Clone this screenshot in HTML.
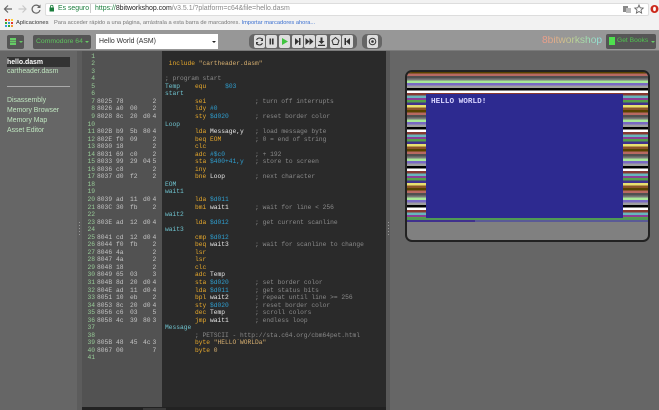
<!DOCTYPE html>
<html><head><meta charset="utf-8"><style>
html,body{margin:0;padding:0;width:659px;height:410px;overflow:hidden;background:#666;font-family:"Liberation Sans",sans-serif}
.a{position:absolute}
.t{position:absolute;white-space:pre;line-height:10px}
#code div{height:7.55px;line-height:7.55px;white-space:pre}
#code{position:absolute;left:165px;top:52.6px;font:6.25px/7.55px "Liberation Mono",monospace;color:#ddd}
.k{color:#e8a92c}.l{color:#6fc3cf}.h{color:#2f9fd0}.c{color:#8a8a8a}.s{color:#d8b070}.v{color:#e8e8e8}
#gut{position:absolute;left:82px;top:52.6px;width:80px;font:6.3px/7.55px "Liberation Mono",monospace;color:#c4c4c4}
#gut div{height:7.55px;position:relative}
#gut span{position:absolute;top:0}
#gut .n{right:67px;color:#98cc98}
.b0{left:15px}.b1{left:34px}.b2{left:48px}.b3{left:61px}.cy{left:70.5px}
.btn{position:absolute;top:35px;width:11px;height:13px;background:#ddd;border-radius:2px}
.btn svg{position:absolute;left:0;top:0;width:11px;height:13px}
.side{position:absolute;left:7px;font-size:6.9px;line-height:10px;color:#bfe5bf;white-space:pre}
</style></head><body>
<!-- chrome -->
<div class="a" style="left:0;top:0;width:659px;height:30px;background:#f2f2f2"></div>
<div class="a" style="left:45px;top:3px;width:602px;height:11px;background:#fff;border:1px solid #ddd;border-radius:2px"></div>
<svg class="a" style="left:0;top:0" width="659" height="30">
<path d="M12 9H5M8 5.5L4.500 9L8 12.500" fill="none" stroke="#666" stroke-width="1.200"/>
<path d="M18.500 9H26M22.500 5.500L26 9L22.500 12.500" fill="none" stroke="#c8c8c8" stroke-width="1.200"/>
<path d="M39.500 7A4 4 0 1 0 40 10" fill="none" stroke="#666" stroke-width="1.200"/><path d="M40.500 4.500V8H37z" fill="#666"/>
<rect x="49.500" y="7.500" width="4.500" height="4" fill="#1a7d3c"/><path d="M50.500 7.500V6.500a1.200 1.200 0 0 1 2.500 0V7.500" fill="none" stroke="#1a7d3c" stroke-width=".8"/>
<rect x="90" y="4" width="1" height="9" fill="#ccc"/>
<rect x="623" y="6" width="5" height="6" fill="#888"/><rect x="626" y="8" width="5" height="5" fill="#bbb"/>
<path d="M639 5l1.200 2.800 3 .3-2.200 2 .6 3-2.600-1.600-2.600 1.600.6-3-2.200-2 3-.3z" fill="none" stroke="#666" stroke-width=".9"/>
<circle cx="654.500" cy="9" r="4" fill="#cc2a1c"/><ellipse cx="654.500" cy="9" rx="1.400" ry="2.200" fill="#fff"/>
<g><rect x="5" y="19" width="2" height="2" fill="#d33"/><rect x="8" y="19" width="2" height="2" fill="#e93"/><rect x="11" y="19" width="2" height="2" fill="#fc3"/><rect x="5" y="22" width="2" height="2" fill="#3a3"/><rect x="8" y="22" width="2" height="2" fill="#39d"/><rect x="11" y="22" width="2" height="2" fill="#d33"/><rect x="5" y="25" width="2" height="2" fill="#39d"/><rect x="8" y="25" width="2" height="2" fill="#3a3"/><rect x="11" y="25" width="2" height="2" fill="#e93"/></g>
</svg>
<div class="t" style="left:58px;top:4px;font-size:6.9px;color:#1a7d3c">Es seguro</div>
<div class="t" style="left:95px;top:4px;font-size:6.95px;color:#888"><span style="color:#1a7d3c">https://</span><span style="color:#222">8bitworkshop.com</span>/v3.5.1/?platform=c64&amp;file=hello.dasm</div>
<div class="t" style="left:16px;top:18px;font-size:5.8px;color:#333">Aplicaciones</div>
<div class="t" style="left:54px;top:18px;font-size:5.7px;color:#777">Para acceder rápido a una página, arrástrala a esta barra de marcadores. <span style="color:#3a6fd0">Importar marcadores ahora...</span></div>
<!-- toolbar -->
<div class="a" style="left:0;top:30px;width:659px;height:20px;background:#979797;border-bottom:1px solid #7a7a7a"></div>
<div class="a" style="left:7px;top:35px;width:17px;height:14px;background:#555;border-radius:2px"></div>
<div class="a" style="left:10px;top:38px;width:6px;height:1.500px;background:#6c6;box-shadow:0 2.500px 0 #6c6,0 5px 0 #6c6"></div>
<div class="a" style="left:18.500px;top:41px;border:2px solid transparent;border-top-color:#6c6"></div>
<div class="a" style="left:33px;top:35px;width:58px;height:14px;background:#555;border-radius:2px"></div>
<div class="t" style="left:36px;top:37px;font-size:6.8px;color:#5fc45f">Commodore 64</div>
<div class="a" style="left:85px;top:41px;border:2px solid transparent;border-top-color:#6c6"></div>
<div class="a" style="left:96px;top:34px;width:122px;height:15px;background:#fff"></div>
<div class="t" style="left:99px;top:37px;font-size:6.9px;color:#333">Hello World (ASM)</div>
<div class="a" style="left:212px;top:41px;border:2px solid transparent;border-top-color:#222"></div>
<div class="a" style="left:249px;top:34px;width:108px;height:15px;background:#666;border-radius:5px"></div>
<div class="a" style="left:362px;top:34px;width:20px;height:15px;background:#666;border-radius:5px"></div>
<div class="btn" style="left:254px"><svg viewBox="0 0 11 13"><path d="M8.500 5A3.200 3.200 0 0 0 2.600 5M2.500 8A3.200 3.200 0 0 0 8.400 8" fill="none" stroke="#333" stroke-width="1"/><path d="M9 3v3H6.500zM2 10V7h2.500z" fill="#333"/></svg></div>
<div class="btn" style="left:266px"><svg viewBox="0 0 11 13"><path d="M3.500 3.500h1.600v6H3.500zM6 3.500h1.600v6H6z" fill="#333"/></svg></div>
<div class="btn" style="left:279px"><svg viewBox="0 0 11 13"><path d="M3 3l6 3.500L3 10z" fill="#3fc43f"/></svg></div>
<div class="btn" style="left:292px"><svg viewBox="0 0 11 13"><path d="M3 3l4 3.500L3 10z" fill="#333"/><path d="M7 3h1.500v7H7z" fill="#333"/></svg></div>
<div class="btn" style="left:304px"><svg viewBox="0 0 11 13"><path d="M1.500 3l4 3.500-4 3.500zM5.500 3l4 3.500-4 3.500z" fill="#333"/></svg></div>
<div class="btn" style="left:316px"><svg viewBox="0 0 11 13"><path d="M4.500 2.500h2v3.500H8.500L5.500 9 2.500 6h2zM2 9.800h7v1.200H2z" fill="#333"/></svg></div>
<div class="btn" style="left:329.500px"><svg viewBox="0 0 11 13"><path d="M5.500 2.500l3.500 3-1.300 4H3.300l-1.300-4z" fill="none" stroke="#333" stroke-width="1"/></svg></div>
<div class="btn" style="left:341.500px"><svg viewBox="0 0 11 13"><path d="M8 3L4 6.500 8 10z" fill="#333"/><path d="M2.500 3H4v7H2.500z" fill="#333"/></svg></div>
<div class="btn" style="left:366.500px"><svg viewBox="0 0 11 13"><circle cx="5.500" cy="6.500" r="3.300" fill="none" stroke="#333" stroke-width="1"/><circle cx="5.500" cy="6.500" r="1.300" fill="#333"/></svg></div>
<div class="t" style="left:542px;top:36px;font-size:10.2px;background:linear-gradient(90deg,#f09a8a,#e0b088 25%,#c0d090 50%,#a0e0b0 75%,#90e0e0);-webkit-background-clip:text;background-clip:text;color:transparent">8bitworkshop</div>
<div class="a" style="left:606px;top:34px;width:50px;height:15px;background:#555;border-radius:2px"></div>
<div class="a" style="left:609px;top:37px;width:6px;height:7.500px;background:#4fe04f"></div>
<div class="t" style="left:617px;top:36px;font-size:6.700px;color:#4fc44f">Get Books</div>
<div class="a" style="left:650.500px;top:41px;border:2px solid transparent;border-top-color:#6c6"></div>
<!-- panes -->
<div class="a" style="left:0;top:51px;width:77px;height:359px;background:#666"></div>
<div class="a" style="left:77px;top:51px;width:5px;height:359px;background:#5c5c5c"></div>
<div class="a" style="left:79px;top:222px;width:1px;height:14px;background:repeating-linear-gradient(#999 0 1px,transparent 1px 3px)"></div>
<div class="a" style="left:82px;top:51px;width:80px;height:356px;background:#525252"></div>
<div class="a" style="left:162px;top:51px;width:224px;height:356px;background:#2a2a2a"></div>
<div class="a" style="left:82px;top:407px;width:304px;height:3px;background:#222"></div>
<div class="a" style="left:143px;top:408px;width:23px;height:2px;background:#3a3a3a"></div>
<div class="a" style="left:386px;top:51px;width:4px;height:359px;background:#585858"></div>
<div class="a" style="left:388px;top:222px;width:1px;height:14px;background:repeating-linear-gradient(#999 0 1px,transparent 1px 3px)"></div>
<div class="a" style="left:390px;top:51px;width:269px;height:359px;background:#666"></div>
<!-- sidebar -->
<div class="a" style="left:7px;top:57px;width:63px;height:10px;background:#333"></div>
<div class="side" style="top:57.500px;color:#fff;font-weight:bold;font-size:6.9px">hello.dasm</div>
<div class="side" style="top:67px;">cartheader.dasm</div>
<div class="a" style="left:7px;top:86px;width:63px;height:1px;background:#aaa"></div>
<div class="side" style="top:96px">Disassembly</div>
<div class="side" style="top:106px">Memory Browser</div>
<div class="side" style="top:116px">Memory Map</div>
<div class="side" style="top:125.500px">Asset Editor</div>
<!-- gutter -->
<div id="gut">
<div><span class="n">1</span></div>
<div><span class="n">2</span></div>
<div><span class="n">3</span></div>
<div><span class="n">4</span></div>
<div><span class="n">5</span></div>
<div><span class="n">6</span></div>
<div><span class="n">7</span><span class="b0">8025</span><span class="b1">78</span><span class="cy">2</span></div>
<div><span class="n">8</span><span class="b0">8026</span><span class="b1">a0</span><span class="b2">00</span><span class="cy">2</span></div>
<div><span class="n">9</span><span class="b0">8028</span><span class="b1">8c</span><span class="b2">20</span><span class="b3">d0</span><span class="cy">4</span></div>
<div><span class="n">10</span></div>
<div><span class="n">11</span><span class="b0">802B</span><span class="b1">b9</span><span class="b2">5b</span><span class="b3">80</span><span class="cy">4</span></div>
<div><span class="n">12</span><span class="b0">802E</span><span class="b1">f0</span><span class="b2">09</span><span class="cy">2</span></div>
<div><span class="n">13</span><span class="b0">8030</span><span class="b1">18</span><span class="cy">2</span></div>
<div><span class="n">14</span><span class="b0">8031</span><span class="b1">69</span><span class="b2">c0</span><span class="cy">2</span></div>
<div><span class="n">15</span><span class="b0">8033</span><span class="b1">99</span><span class="b2">29</span><span class="b3">04</span><span class="cy">5</span></div>
<div><span class="n">16</span><span class="b0">8036</span><span class="b1">c8</span><span class="cy">2</span></div>
<div><span class="n">17</span><span class="b0">8037</span><span class="b1">d0</span><span class="b2">f2</span><span class="cy">2</span></div>
<div><span class="n">18</span></div>
<div><span class="n">19</span></div>
<div><span class="n">20</span><span class="b0">8039</span><span class="b1">ad</span><span class="b2">11</span><span class="b3">d0</span><span class="cy">4</span></div>
<div><span class="n">21</span><span class="b0">803C</span><span class="b1">30</span><span class="b2">fb</span><span class="cy">2</span></div>
<div><span class="n">22</span></div>
<div><span class="n">23</span><span class="b0">803E</span><span class="b1">ad</span><span class="b2">12</span><span class="b3">d0</span><span class="cy">4</span></div>
<div><span class="n">24</span></div>
<div><span class="n">25</span><span class="b0">8041</span><span class="b1">cd</span><span class="b2">12</span><span class="b3">d0</span><span class="cy">4</span></div>
<div><span class="n">26</span><span class="b0">8044</span><span class="b1">f0</span><span class="b2">fb</span><span class="cy">2</span></div>
<div><span class="n">27</span><span class="b0">8046</span><span class="b1">4a</span><span class="cy">2</span></div>
<div><span class="n">28</span><span class="b0">8047</span><span class="b1">4a</span><span class="cy">2</span></div>
<div><span class="n">29</span><span class="b0">8048</span><span class="b1">18</span><span class="cy">2</span></div>
<div><span class="n">30</span><span class="b0">8049</span><span class="b1">65</span><span class="b2">03</span><span class="cy">3</span></div>
<div><span class="n">31</span><span class="b0">804B</span><span class="b1">8d</span><span class="b2">20</span><span class="b3">d0</span><span class="cy">4</span></div>
<div><span class="n">32</span><span class="b0">804E</span><span class="b1">ad</span><span class="b2">11</span><span class="b3">d0</span><span class="cy">4</span></div>
<div><span class="n">33</span><span class="b0">8051</span><span class="b1">10</span><span class="b2">eb</span><span class="cy">2</span></div>
<div><span class="n">34</span><span class="b0">8053</span><span class="b1">8c</span><span class="b2">20</span><span class="b3">d0</span><span class="cy">4</span></div>
<div><span class="n">35</span><span class="b0">8056</span><span class="b1">c6</span><span class="b2">03</span><span class="cy">5</span></div>
<div><span class="n">36</span><span class="b0">8058</span><span class="b1">4c</span><span class="b2">39</span><span class="b3">80</span><span class="cy">3</span></div>
<div><span class="n">37</span></div>
<div><span class="n">38</span></div>
<div><span class="n">39</span><span class="b0">805B</span><span class="b1">48</span><span class="b2">45</span><span class="b3">4c</span><span class="cy">3</span></div>
<div><span class="n">40</span><span class="b0">8067</span><span class="b1">00</span><span class="cy">7</span></div>
<div><span class="n">41</span></div>
</div>
<!-- code -->
<div id="code">
<div> </div>
<div> <span class="k">include</span> <span class="s">"cartheader.dasm"</span></div>
<div> </div>
<div><span class="c">; program start</span></div>
<div><span class="l">Temp</span>    <span class="k">equ</span>     <span class="h">$03</span></div>
<div><span class="l">start</span></div>
<div>        <span class="k">sei</span>             <span class="c">; turn off interrupts</span></div>
<div>        <span class="k">ldy</span> <span class="h">#0</span></div>
<div>        <span class="k">sty</span> <span class="h">$d020</span>       <span class="c">; reset border color</span></div>
<div><span class="l">Loop</span></div>
<div>        <span class="k">lda</span> <span class="v">Message,y</span>   <span class="c">; load message byte</span></div>
<div>        <span class="k">beq</span> <span class="k">EOM</span>         <span class="c">; 0 = end of string</span></div>
<div>        <span class="k">clc</span></div>
<div>        <span class="k">adc</span> <span class="h">#$c0</span>        <span class="c">; + 192</span></div>
<div>        <span class="k">sta</span> <span class="h">$400+41,y</span>   <span class="c">; store to screen</span></div>
<div>        <span class="k">iny</span></div>
<div>        <span class="k">bne</span> <span class="v">Loop</span>        <span class="c">; next character</span></div>
<div><span class="l">EOM</span></div>
<div><span class="l">wait1</span></div>
<div>        <span class="k">lda</span> <span class="h">$d011</span></div>
<div>        <span class="k">bmi</span> <span class="v">wait1</span>       <span class="c">; wait for line &lt; 256</span></div>
<div><span class="l">wait2</span></div>
<div>        <span class="k">lda</span> <span class="h">$d012</span>       <span class="c">; get current scanline</span></div>
<div><span class="l">wait3</span></div>
<div>        <span class="k">cmp</span> <span class="h">$d012</span></div>
<div>        <span class="k">beq</span> <span class="v">wait3</span>       <span class="c">; wait for scanline to change</span></div>
<div>        <span class="k">lsr</span></div>
<div>        <span class="k">lsr</span></div>
<div>        <span class="k">clc</span></div>
<div>        <span class="k">adc</span> <span class="v">Temp</span></div>
<div>        <span class="k">sta</span> <span class="h">$d020</span>       <span class="c">; set border color</span></div>
<div>        <span class="k">lda</span> <span class="h">$d011</span>       <span class="c">; get status bits</span></div>
<div>        <span class="k">bpl</span> <span class="v">wait2</span>       <span class="c">; repeat until line &gt;= 256</span></div>
<div>        <span class="k">sty</span> <span class="h">$d020</span>       <span class="c">; reset border color</span></div>
<div>        <span class="k">dec</span> <span class="v">Temp</span>        <span class="c">; scroll colors</span></div>
<div>        <span class="k">jmp</span> <span class="v">wait1</span>       <span class="c">; endless loop</span></div>
<div><span class="l">Message</span></div>
<div>        <span class="c">; PETSCII - http://sta.c64.org/cbm64pet.html</span></div>
<div>        <span class="k">byte</span> <span class="s">"HELLO`WORLDa"</span></div>
<div>        <span class="k">byte</span> <span class="s">0</span></div>
<div> </div>
</div>
<!-- emulator -->
<div class="a" style="left:404.500px;top:70px;width:241px;height:168px;border:2px solid #222;border-radius:7px;background:#808080;overflow:hidden">
  <div class="a" style="left:0;top:0;width:241px;height:149px;overflow:hidden">
    <div class="a" style="left:0;top:-23px;width:241px;height:195px;background:repeating-linear-gradient(180deg,#000 0 2.440px,#fff 2.440px 4.880px,#883932 4.880px 7.320px,#67b6bd 7.320px 9.760px,#8b3f96 9.760px 12.200px,#55a049 12.200px 14.640px,#40318d 14.640px 17.080px,#e8e070 17.080px 19.520px,#8b5429 19.520px 21.960px,#574200 21.960px 24.400px,#b86962 24.400px 26.840px,#505050 26.840px 29.280px,#787878 29.280px 31.720px,#a8e898 31.720px 34.160px,#7869c4 34.160px 36.600px,#9f9f9f 36.600px 39px)"></div>
  </div>
  <div class="a" style="left:19.500px;top:22px;width:197px;height:124px;background:#2d2a90"></div>
  <div class="a" style="left:0;top:146px;width:241px;height:1.500px;background:#4f9a55"></div>
  <div class="a" style="left:0;top:147.500px;width:241px;height:2px;background:#5a5a96"></div>
  <div class="a" style="left:0;top:147.500px;width:68px;height:2px;background:#40318d"></div>
  <div class="t" style="left:24.500px;top:24.500px;font:bold 7.700px/10px 'Liberation Mono',monospace;color:#d8d4ff">HELLO WORLD!</div>
</div>
</body></html>
